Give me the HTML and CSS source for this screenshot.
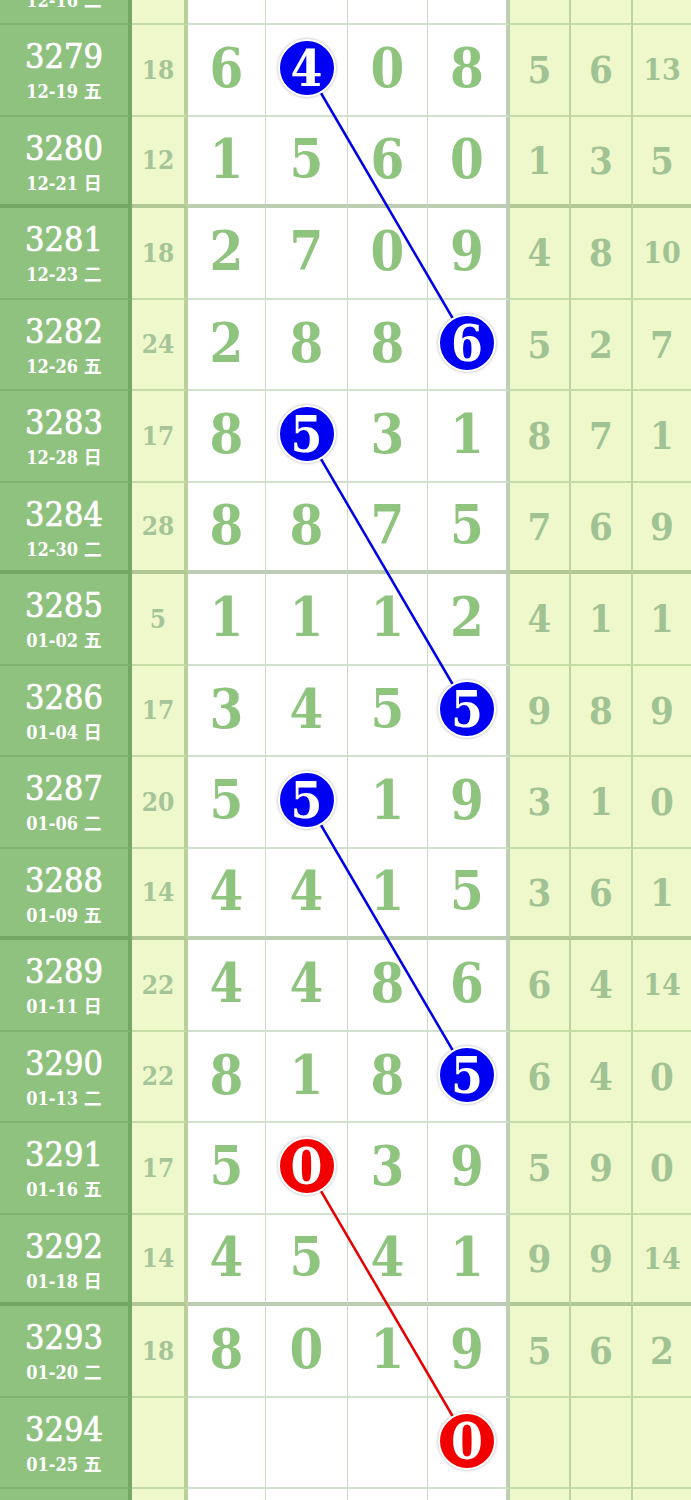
FILE: index.html
```html
<!DOCTYPE html>
<html lang="zh">
<head>
<meta charset="utf-8">
<title>走势图</title>
<link rel="stylesheet" href="styles.css">
</head>
<body>
<div class="board">
  <div class="table">
    <div class="row top">
      <div class="lbl"><span class="no">3278</span><span class="dt">12-16 二</span></div>
      <div class="sum"></div>
      <div class="d"></div><div class="d"></div><div class="d"></div><div class="d d4"></div>
      <div class="r"></div><div class="r"></div><div class="r r3"></div>
    </div>
    <div class="row">
      <div class="lbl"><span class="no">3279</span><span class="dt">12-19 五</span></div>
      <div class="sum">18</div>
      <div class="d">6</div><div class="d"><span class="ball blue">4</span></div><div class="d">0</div><div class="d d4">8</div>
      <div class="r">5</div><div class="r">6</div><div class="r r3 two">13</div>
    </div>
    <div class="row sep">
      <div class="lbl"><span class="no">3280</span><span class="dt">12-21 日</span></div>
      <div class="sum">12</div>
      <div class="d">1</div><div class="d">5</div><div class="d">6</div><div class="d d4">0</div>
      <div class="r">1</div><div class="r">3</div><div class="r r3">5</div>
    </div>
    <div class="row">
      <div class="lbl"><span class="no">3281</span><span class="dt">12-23 二</span></div>
      <div class="sum">18</div>
      <div class="d">2</div><div class="d">7</div><div class="d">0</div><div class="d d4">9</div>
      <div class="r">4</div><div class="r">8</div><div class="r r3 two">10</div>
    </div>
    <div class="row">
      <div class="lbl"><span class="no">3282</span><span class="dt">12-26 五</span></div>
      <div class="sum">24</div>
      <div class="d">2</div><div class="d">8</div><div class="d">8</div><div class="d d4"><span class="ball blue">6</span></div>
      <div class="r">5</div><div class="r">2</div><div class="r r3">7</div>
    </div>
    <div class="row">
      <div class="lbl"><span class="no">3283</span><span class="dt">12-28 日</span></div>
      <div class="sum">17</div>
      <div class="d">8</div><div class="d"><span class="ball blue">5</span></div><div class="d">3</div><div class="d d4">1</div>
      <div class="r">8</div><div class="r">7</div><div class="r r3">1</div>
    </div>
    <div class="row sep">
      <div class="lbl"><span class="no">3284</span><span class="dt">12-30 二</span></div>
      <div class="sum">28</div>
      <div class="d">8</div><div class="d">8</div><div class="d">7</div><div class="d d4">5</div>
      <div class="r">7</div><div class="r">6</div><div class="r r3">9</div>
    </div>
    <div class="row">
      <div class="lbl"><span class="no">3285</span><span class="dt">01-02 五</span></div>
      <div class="sum">5</div>
      <div class="d">1</div><div class="d">1</div><div class="d">1</div><div class="d d4">2</div>
      <div class="r">4</div><div class="r">1</div><div class="r r3">1</div>
    </div>
    <div class="row">
      <div class="lbl"><span class="no">3286</span><span class="dt">01-04 日</span></div>
      <div class="sum">17</div>
      <div class="d">3</div><div class="d">4</div><div class="d">5</div><div class="d d4"><span class="ball blue">5</span></div>
      <div class="r">9</div><div class="r">8</div><div class="r r3">9</div>
    </div>
    <div class="row">
      <div class="lbl"><span class="no">3287</span><span class="dt">01-06 二</span></div>
      <div class="sum">20</div>
      <div class="d">5</div><div class="d"><span class="ball blue">5</span></div><div class="d">1</div><div class="d d4">9</div>
      <div class="r">3</div><div class="r">1</div><div class="r r3">0</div>
    </div>
    <div class="row sep">
      <div class="lbl"><span class="no">3288</span><span class="dt">01-09 五</span></div>
      <div class="sum">14</div>
      <div class="d">4</div><div class="d">4</div><div class="d">1</div><div class="d d4">5</div>
      <div class="r">3</div><div class="r">6</div><div class="r r3">1</div>
    </div>
    <div class="row">
      <div class="lbl"><span class="no">3289</span><span class="dt">01-11 日</span></div>
      <div class="sum">22</div>
      <div class="d">4</div><div class="d">4</div><div class="d">8</div><div class="d d4">6</div>
      <div class="r">6</div><div class="r">4</div><div class="r r3 two">14</div>
    </div>
    <div class="row">
      <div class="lbl"><span class="no">3290</span><span class="dt">01-13 二</span></div>
      <div class="sum">22</div>
      <div class="d">8</div><div class="d">1</div><div class="d">8</div><div class="d d4"><span class="ball blue">5</span></div>
      <div class="r">6</div><div class="r">4</div><div class="r r3">0</div>
    </div>
    <div class="row">
      <div class="lbl"><span class="no">3291</span><span class="dt">01-16 五</span></div>
      <div class="sum">17</div>
      <div class="d">5</div><div class="d"><span class="ball red">0</span></div><div class="d">3</div><div class="d d4">9</div>
      <div class="r">5</div><div class="r">9</div><div class="r r3">0</div>
    </div>
    <div class="row sep">
      <div class="lbl"><span class="no">3292</span><span class="dt">01-18 日</span></div>
      <div class="sum">14</div>
      <div class="d">4</div><div class="d">5</div><div class="d">4</div><div class="d d4">1</div>
      <div class="r">9</div><div class="r">9</div><div class="r r3 two">14</div>
    </div>
    <div class="row">
      <div class="lbl"><span class="no">3293</span><span class="dt">01-20 二</span></div>
      <div class="sum">18</div>
      <div class="d">8</div><div class="d">0</div><div class="d">1</div><div class="d d4">9</div>
      <div class="r">5</div><div class="r">6</div><div class="r r3">2</div>
    </div>
    <div class="row">
      <div class="lbl"><span class="no">3294</span><span class="dt">01-25 五</span></div>
      <div class="sum"></div>
      <div class="d"></div><div class="d"></div><div class="d"></div><div class="d d4"><span class="ball red">0</span></div>
      <div class="r"></div><div class="r"></div><div class="r r3"></div>
    </div>
    <div class="row">
      <div class="lbl"></div>
      <div class="sum"></div>
      <div class="d"></div><div class="d"></div><div class="d"></div><div class="d d4"></div>
      <div class="r"></div><div class="r"></div><div class="r r3"></div>
    </div>
  </div>
  <svg class="links" width="691" height="1500" viewBox="0 0 691 1500" aria-hidden="true">
    <line x1="306.5" y1="68.25" x2="467" y2="342.75" class="lb"/>
    <line x1="306.5" y1="434.25" x2="467" y2="708.75" class="lb"/>
    <line x1="306.5" y1="800.25" x2="467" y2="1074.75" class="lb"/>
    <line x1="306.5" y1="1166.25" x2="467" y2="1440.75" class="lr"/>
  </svg>
</div>
</body>
</html>
```

FILE: styles.css
```css
html, body {
  margin: 0;
  padding: 0;
  background: #ffffff;
}

.board {
  position: relative;
  width: 691px;
  height: 1500px;
  overflow: hidden;
}

.table {
  margin-top: -66.5px;
  font-family: "DejaVu Serif Condensed", "DejaVu Serif", "Noto Sans CJK SC", serif;
  font-stretch: condensed;
}

.row {
  display: grid;
  grid-template-columns: 132px 56px 78px 82px 80px 82px 61px 62px 58px;
  height: 91.5px;
}

.row > div {
  box-sizing: border-box;
  border-bottom: 2px solid rgba(80, 140, 60, 0.26);
  display: flex;
  align-items: center;
  justify-content: center;
}

.row.sep > div {
  border-bottom: 4px solid rgba(80, 125, 60, 0.38);
}

.lbl {
  background: #8fc17f;
  border-right: 4px solid rgba(70, 120, 55, 0.35);
  color: #ffffff;
  flex-direction: column;
  justify-content: flex-start !important;
  padding-top: 14px;
}

.lbl .no {
  font-size: 34px;
  line-height: 34px;
  -webkit-text-stroke: 0.7px #ffffff;
}

.lbl .dt {
  margin-top: 8px;
  font-size: 18px;
  line-height: 22px;
  font-weight: bold;
}

.sum {
  background: #eff8cb;
  border-right: 4px solid rgba(80, 130, 60, 0.33);
  color: #a5c598;
  font-size: 26px;
  font-weight: bold;
}

.d {
  background: #ffffff;
  border-right: 1px solid rgba(80, 140, 60, 0.3);
  color: #8fc47f;
  font-size: 54px;
  font-weight: bold;
  line-height: 54px;
  padding-bottom: 3px;
}

.d.d4 {
  border-right: 4px solid rgba(80, 130, 60, 0.38);
}

.r {
  background: #eff8cb;
  border-right: 2px solid rgba(80, 130, 60, 0.3);
  color: #a1c394;
  font-size: 38px;
  font-weight: bold;
}

.r.r3 {
  border-right: none;
}

.r.two {
  font-size: 30px;
}

.ball {
  position: relative;
  z-index: 2;
  box-sizing: border-box;
  width: 58px;
  height: 58px;
  border-radius: 50%;
  border: 2.5px solid #ffffff;
  box-shadow: 0 0 3px rgba(0, 0, 0, 0.35);
  color: #ffffff;
  font-size: 51px;
  line-height: 52px;
  font-weight: bold;
  display: flex;
  align-items: center;
  justify-content: center;
}

.ball.blue {
  background: #0000f2;
}

.ball.red {
  background: #f20000;
}

.links {
  position: absolute;
  left: 0;
  top: 0;
  z-index: 1;
  pointer-events: none;
}

.links line {
  stroke-width: 2.5;
}

.links .lb {
  stroke: #0000e6;
}

.links .lr {
  stroke: #e60000;
}
```
